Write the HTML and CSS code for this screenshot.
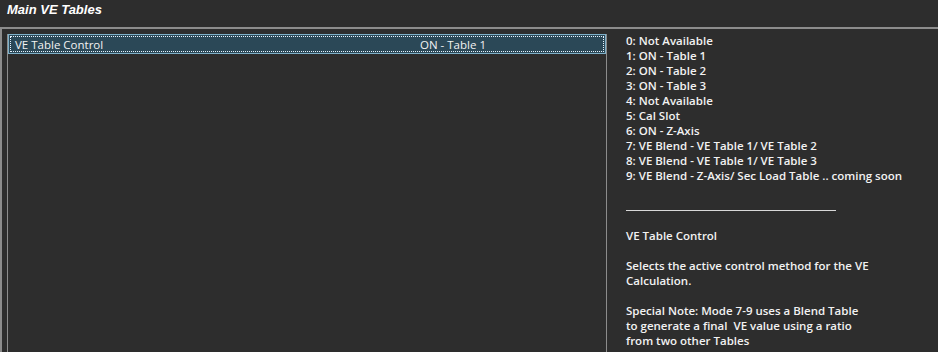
FILE: index.html
```html
<!DOCTYPE html>
<html lang="en">
<head>
    <meta charset="UTF-8">
    <title>Main VE Tables</title>
    <link rel="stylesheet" href="styles.css">
</head>
<body>
    <div class="title">Main VE Tables</div>
    <div class="frame">
        <div class="list-wrap">
            <div class="list">
                <div class="row selected">
                    <span class="row-name">VE Table Control</span>
                    <span class="row-value">ON - Table 1</span>
                </div>
            </div>
        </div>
        <div class="help">
            <div class="options">
                <div>0: Not Available</div>
                <div>1: ON - Table 1</div>
                <div>2: ON - Table 2</div>
                <div>3: ON - Table 3</div>
                <div>4: Not Available</div>
                <div>5: Cal Slot</div>
                <div>6: ON - Z-Axis</div>
                <div>7: VE Blend - VE Table 1/ VE Table 2</div>
                <div>8: VE Blend - VE Table 1/ VE Table 3</div>
                <div>9: VE Blend - Z-Axis/ Sec Load Table .. coming soon</div>
            </div>
            <div class="rule"></div>
            <div class="para">VE Table Control</div>
            <div class="para">Selects the active control method for the VE<br>Calculation.</div>
            <div class="para">Special Note: Mode 7-9 uses a Blend Table<br>to generate a final&nbsp; VE value using a ratio<br>from two other Tables</div>
        </div>
    </div>
</body>
</html>
```

FILE: styles.css
```css
:root {
    --bg: #2d2d2d;
    --line: #8c8c8c;
    --text: #f2f2f2;
    --row-bg: #2b4857;
    --row-border: #7fb0c8;
}

html, body {
    height: 100%;
    margin: 0;
    overflow: hidden;
}

body {
    background: var(--bg);
    color: var(--text);
    font-family: "Open Sans", "Noto Sans", sans-serif;
    display: flex;
    flex-direction: column;
}

.title {
    flex-shrink: 0;
    height: 27px;
    padding: 0 7px;
    box-sizing: border-box;
    font-family: "Liberation Sans", Arial, sans-serif;
    font-weight: bold;
    font-style: italic;
    font-size: 13px;
    line-height: 19px;
    color: #fff;
}

.frame {
    flex: 1;
    display: flex;
    border-top: 2px solid var(--line);
    border-left: 2px solid var(--line);
}

.list-wrap {
    width: 605px;
    padding-left: 5px;
    padding-top: 5px;
    box-sizing: border-box;
    display: flex;
}

.list {
    flex: 1;
    border-left: 1px solid var(--line);
    border-right: 1px solid var(--line);
}

.row {
    height: 20px;
    display: flex;
    align-items: center;
    font-size: 11.5px;
    box-sizing: border-box;
}

.row.selected {
    background: var(--row-bg);
    border: 1px solid var(--row-border);
    outline: 1px dotted #e8f4ff;
    outline-offset: -3px;
}

.row-name {
    width: 405px;
    padding-left: 6px;
}

.help {
    flex: 1;
    padding: 4px 0 0 19px;
    font-size: 11.5px;
    font-weight: 600;
    line-height: 15px;
}

.rule {
    width: 210px;
    height: 1px;
    background: #d8d8d8;
    margin: 27px 0 17px;
}

.para {
    margin-bottom: 15px;
}
```
